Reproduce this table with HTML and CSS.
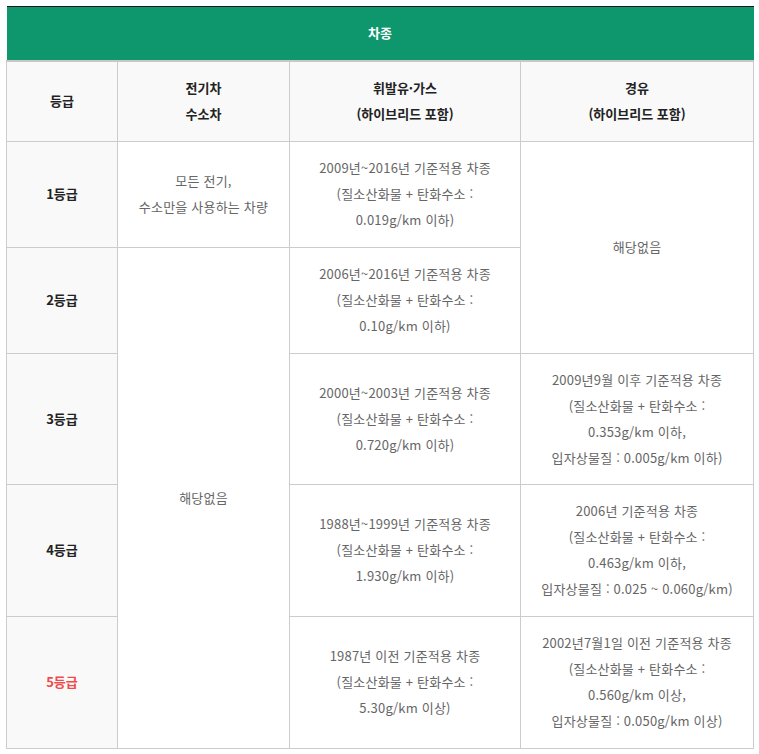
FILE: index.html
```html
<!DOCTYPE html>
<html lang="ko">
<head>
<meta charset="utf-8">
<link rel="stylesheet" href="styles.css">
</head>
<body>
<div class="wrap">
<table class="grade-table">
  <colgroup>
    <col class="c1"><col class="c2"><col class="c3"><col class="c4">
  </colgroup>
  <thead>
    <tr><th colspan="4" class="title">차종</th></tr>
    <tr class="head">
      <th>등급</th>
      <th>전기차<br>수소차</th>
      <th>휘발유·가스<br>(하이브리드 포함)</th>
      <th>경유<br>(하이브리드 포함)</th>
    </tr>
  </thead>
  <tbody>
    <tr class="r-a">
      <th>1등급</th>
      <td>모든 전기,<br>수소만을 사용하는 차량</td>
      <td>2009년~2016년 기준적용 차종<br>(질소산화물 + 탄화수소 :<br>0.019g/km 이하)</td>
      <td rowspan="2">해당없음</td>
    </tr>
    <tr class="r-a">
      <th>2등급</th>
      <td rowspan="4">해당없음</td>
      <td>2006년~2016년 기준적용 차종<br>(질소산화물 + 탄화수소 :<br>0.10g/km 이하)</td>
    </tr>
    <tr class="r-b">
      <th>3등급</th>
      <td>2000년~2003년 기준적용 차종<br>(질소산화물 + 탄화수소 :<br>0.720g/km 이하)</td>
      <td>2009년9월 이후 기준적용 차종<br>(질소산화물 + 탄화수소 :<br>0.353g/km 이하,<br>입자상물질 : 0.005g/km 이하)</td>
    </tr>
    <tr class="r-c">
      <th>4등급</th>
      <td>1988년~1999년 기준적용 차종<br>(질소산화물 + 탄화수소 :<br>1.930g/km 이하)</td>
      <td>2006년 기준적용 차종<br>(질소산화물 + 탄화수소 :<br>0.463g/km 이하,<br>입자상물질 : 0.025 ~ 0.060g/km)</td>
    </tr>
    <tr class="r-c">
      <th class="red">5등급</th>
      <td>1987년 이전 기준적용 차종<br>(질소산화물 + 탄화수소 :<br>5.30g/km 이상)</td>
      <td>2002년7월1일 이전 기준적용 차종<br>(질소산화물 + 탄화수소 :<br>0.560g/km 이상,<br>입자상물질 : 0.050g/km 이상)</td>
    </tr>
  </tbody>
</table>
</div>
</body>
</html>
```

FILE: styles.css
```css
html, body {
  margin: 0;
  padding: 0;
  background: #fff;
}
.wrap {
  padding: 6px 6px 0 6px;
}
.grade-table {
  border-collapse: collapse;
  table-layout: fixed;
  width: 747px;
  border-top: 1px solid #1a1a1a;
  font-family: "Noto Sans CJK KR", "Noto Sans", sans-serif;
  font-size: 13px;
  line-height: 26px;
  color: #666;
}
.c1 { width: 111px; }
.c2 { width: 172px; }
.c3 { width: 231px; }
.c4 { width: 233px; }
.grade-table th,
.grade-table td {
  border: 1px solid #cccccc;
  text-align: center;
  vertical-align: middle;
  padding: 13px 4px 14px;
}
.grade-table th {
  background: #f9f9f9;
  color: #222;
  font-weight: 700;
}
.grade-table td {
  font-weight: 400;
  color: #666;
  letter-spacing: 0.2px;
  background: #fff;
}
.grade-table th.title {
  background: #0e976d;
  color: #fff;
  border-left: 0;
  border-right: 0;
  border-top: 1px solid #1a1a1a;
}
.head th {
  border-top: 2px solid #c8c8c8;
}
.r-b th, .r-b td { padding-top: 13px; padding-bottom: 13px; }
.grade-table th.red {
  color: #f04a4a;
}
```
